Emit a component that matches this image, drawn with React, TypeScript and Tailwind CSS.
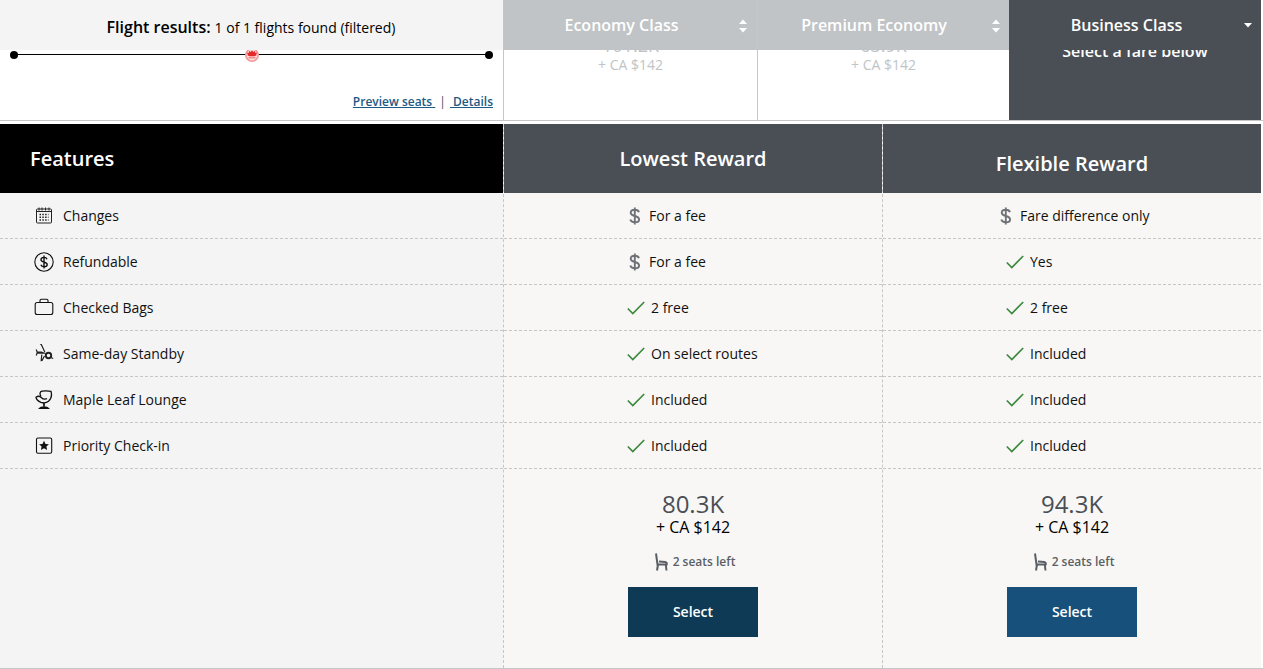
import React from "react";

const font = "font-['Open_Sans',sans-serif]";

const Sort = ({ active, className }: { active?: boolean; className: string }) =>
  active ? (
    <svg width="8" height="5" viewBox="0 0 8 5" className={`absolute top-[23px] ${className}`}>
      <path d="M0 0h8L4 4.500z" fill="#fff" />
    </svg>
  ) : (
    <svg width="8" height="14" viewBox="0 0 8 14" className={`absolute top-[19px] ${className}`}>
      <path d="M0 5h8L4 .5zM0 9h8L4 13.500z" fill="#fff" />
    </svg>
  );

const Calendar = () => (
  <svg width="22" height="20" viewBox="0 0 22 20" fill="none" stroke="#222" strokeWidth="1">
    <rect x="3.500" y="3" width="15" height="14" rx="1" />
    <path d="M6 1.500v3M9 1.500v3M12.500 1.500v3M16 1.500v3M3.500 5.500h15" />
    <path d="M6.500 8.500h9M6.500 11.200h9M6.500 14h9" strokeWidth="1.500" strokeDasharray="1.500 1.300" />
  </svg>
);

const DollarCircle = () => (
  <svg width="22" height="20" viewBox="0 0 22 20" fill="none" stroke="#111" strokeWidth="1.100">
    <circle cx="11" cy="10" r="9.200" />
    <path d="M14 7.200C13.600 6 12.400 5.400 11 5.400c-1.700 0-3 .9-3 2.300 0 3.200 6.200 1.600 6.200 4.700 0 1.400-1.400 2.300-3.100 2.300-1.500 0-2.800-.7-3.200-2M11 3.500v13" strokeWidth="1.400" />
  </svg>
);

const Bag = () => (
  <svg width="22" height="20" viewBox="0 0 22 20" fill="none" stroke="#111" strokeWidth="1.100">
    <rect x="2.200" y="4.500" width="17.600" height="12" rx="2" />
    <path d="M7 4.500V2.500C7 1.800 7.500 1.200 8.200 1.200h5.600c.7 0 1.200.6 1.200 1.300v2" />
  </svg>
);

const Standby = () => (
  <svg width="22" height="20" viewBox="0 0 22 20" fill="none" stroke="#222" strokeWidth="1.200">
    <path d="M3.200 5.500l1.200 3-1.200 3M3.500 8.200h4.800l4.200 1.300M3.500 9.200h6.500M7.300 .3l1 .2 3.500 7.500M8.800 10.500l-.6 6 .9-.1 2.400-4.400" />
    <circle cx="15.500" cy="11.500" r="2.700" strokeWidth="1.900" />
    <path d="M18 13.500l2.200 1" />
  </svg>
);

const Lounge = () => (
  <svg width="22" height="20" viewBox="0 0 22 20" fill="none" stroke="#111" strokeWidth="1.300">
    <path d="M8 6.500C6.600 4.500 6.600 1.500 9 1.100c3-.3 6.500-.3 9 .3 1 3.500.2 7.500-2.500 9.900-1.900 1.500-5 1.800-7.500 1-2.500-1-4.600-2.800-5-5C4.800 5.900 7 6.200 8.500 7.700c1.300 1.300 3.500 1.700 5.500 1" />
    <path d="M11 13v3.500" strokeWidth="1.700" />
    <path d="M6.500 18.400c1.500-1.900 7.500-1.900 9 0z" fill="#111" />
  </svg>
);

const StarBox = () => (
  <svg width="22" height="20" viewBox="0 0 22 20" fill="none">
    <rect x="3.500" y="2" width="15.200" height="15.200" rx="1.500" stroke="#111" strokeWidth="1.100" />
    <path d="M11 4.800l1.500 3.100 3.400.4-2.500 2.300.7 3.300-3.100-1.700-3.100 1.700.7-3.300-2.500-2.300 3.400-.4z" fill="#111" />
  </svg>
);

const Dollar = () => (
  <svg width="12" height="18" viewBox="0 0 12 18" fill="none" stroke="#6f7377" strokeWidth="1.900">
    <path d="M9.900 5.300C9.500 3.500 7.800 2.800 5.800 2.800 3.600 2.800 1.700 3.900 1.700 5.700c0 4.200 8.400 2.400 8.400 6.700 0 1.800-2 2.900-4.300 2.900-2.200 0-4-.9-4.500-2.700M5.800 .6v16.800" />
  </svg>
);

const Check = () => (
  <svg width="18" height="14" viewBox="0 0 18 14" fill="none" stroke="#3b8a3e" strokeWidth="1.700">
    <path d="M.8 7.500l5 5L17.200 1" />
  </svg>
);

const Seat = () => (
  <svg width="14" height="18" viewBox="0 0 14 18" fill="none" stroke="#5a5f65" strokeWidth="2">
    <path d="M2 .5l1.500 11h9.200c.4-1.200-.3-2.400-1.500-2.600L5 8.500" />
    <path d="M4 11.500l-1 6M11.800 11.500l.7 6" />
  </svg>
);

const features = [
  { label: "Changes", icon: <Calendar /> },
  { label: "Refundable", icon: <DollarCircle /> },
  { label: "Checked Bags", icon: <Bag /> },
  { label: "Same-day Standby", icon: <Standby /> },
  { label: "Maple Leaf Lounge", icon: <Lounge /> },
  { label: "Priority Check-in", icon: <StarBox /> },
];

type Cell = { text: string; fee?: boolean; wide?: boolean };

const lowest: Cell[] = [
  { text: "For a fee", fee: true },
  { text: "For a fee", fee: true },
  { text: "2 free" },
  { text: "On select routes" },
  { text: "Included" },
  { text: "Included" },
];

const flexible: Cell[] = [
  { text: "Fare difference only", fee: true, wide: true },
  { text: "Yes" },
  { text: "2 free" },
  { text: "Included" },
  { text: "Included" },
  { text: "Included" },
];

const CabinTab = ({
  title,
  price,
  active,
  className,
  titleClass,
  sortClass,
}: {
  title: string;
  price?: string;
  active?: boolean;
  className: string;
  titleClass: string;
  sortClass: string;
}) => (
  <div className={`relative flex flex-col overflow-hidden ${className} ${active ? "bg-[#4a4f55]" : "bg-white border-l border-[#c4c6c8]"}`}>
    <div className={`relative h-[50px] shrink-0 flex items-center justify-center text-[16px] font-semibold text-white ${titleClass} ${active ? "bg-[#4a4f55]" : "bg-[#c0c4c7]"}`}>
      {title}
      <Sort active={active} className={sortClass} />
    </div>
    {active ? (
      <div className="h-[12px] overflow-hidden flex justify-center">
        <div className="text-[16px] font-semibold text-white leading-[22px] -mt-[10px]">Select a fare below</div>
      </div>
    ) : (
      <div className="h-[24px] overflow-hidden text-center text-[#c0c4c7]">
        <div className="text-[18px] leading-[20px] -mt-[15px]">{price}</div>
        <div className="text-[14px] leading-[19px]">+ CA $142</div>
      </div>
    )}
  </div>
);

const FareColumn = ({
  title,
  cells,
  points,
  button,
  titleClass,
}: {
  title: string;
  cells: Cell[];
  points: string;
  button: string;
  titleClass: string;
}) => (
  <div className="w-[379px] bg-[#f8f7f5] border-l border-dashed border-[#c4c6c8] flex flex-col">
    <div className={`h-[69px] bg-[#4a4f55] flex justify-center text-[20px] font-semibold text-white ${titleClass}`}>
      {title}
    </div>
    {cells.map((c, i) => (
      <div key={i} className={`h-[46px] flex items-center border-b border-dashed border-[#c4c6c8] text-[14px] text-[#111] ${c.wide ? "pl-[117px]" : c.fee ? "pl-[125px]" : "pl-[123px]"}`}>
        {c.fee ? (
          <span className="w-[20px] flex"><Dollar /></span>
        ) : (
          <span className="w-[24px] flex"><Check /></span>
        )}
        {c.text}
      </div>
    ))}
    <div className="flex-1 flex flex-col items-center pt-[20px]">
      <div className="text-[24px] leading-[30px] text-[#4a4f55]">{points}</div>
      <div className="text-[16px] leading-[20px] text-black mt-[-2px]">+ CA $142</div>
      <div className="mt-[16px] flex items-center gap-[5px] pl-[3px] text-[12px] font-semibold text-[#5a5f65] h-[18px]">
        <Seat />
        2 seats left
      </div>
      <button className={`mt-[16px] w-[130px] h-[50px] pb-[2px] text-[14px] font-semibold text-white ${button}`}>Select</button>
    </div>
  </div>
);

export default function App() {
  return (
    <div className={`${font} w-[1263px] h-[669px] bg-white overflow-hidden`}>
      <div className="h-[121px] flex border-b border-[#c4c6c8]">
        <div className="w-[503px] shrink-0 flex flex-col">
          <div className="h-[50px] bg-[#f4f4f4] flex items-center justify-center text-[14px] text-black pt-[4px] pr-[1px]">
            <span className="font-semibold text-[16px] leading-[20px] mr-[4px]">Flight results:</span> 1 of 1 flights found (filtered)
          </div>
          <div className="relative h-[12px] mx-[10px]">
            <div className="absolute left-[4px] right-[4px] top-[4px] h-[1px] bg-black" />
            <div className="absolute left-0 top-[1px] w-[8px] h-[8px] rounded-full bg-black" />
            <div className="absolute right-0 top-[1px] w-[8px] h-[8px] rounded-full bg-black" />
            <svg width="14" height="12" viewBox="0 0 14 12" className="absolute left-[235px] top-0">
              <circle cx="7" cy="5" r="6.200" fill="#fbdcdc" stroke="#f29a9a" strokeWidth="1.600" />
              <path d="M7 .2l1.300 1.700 1.700-.8.300 1.900 1.700-.4-.8 3-1.700.7H4.500l-1.700-.7-.8-3 1.700.4.300-1.900 1.700.8z" fill="#e32b2b" />
              <path d="M3.500 7.800h7" stroke="#ee6a6a" strokeWidth="1" />
            </svg>
          </div>
          <div className="flex-1 flex items-end justify-end pr-[10px] pb-[10px] text-[12px] font-semibold leading-[16px] text-[#4a4f55]">
            <a className="text-[#1c5a84] underline whitespace-pre">Preview seats </a>
            <span className="mx-[4px] font-normal">|</span>
            <a className="text-[#1c5a84] underline whitespace-pre"> Details</a>
          </div>
        </div>
        <CabinTab title="Economy Class" price="101.2K" className="w-[254px]" titleClass="pr-[18px]" sortClass="right-[10px]" />
        <CabinTab title="Premium Economy" price="63.9K" className="w-[252px]" titleClass="pr-[19px]" sortClass="right-[9px]" />
        <CabinTab title="Business Class" active className="w-[252px]" titleClass="pr-[17px]" sortClass="right-[9px]" />
      </div>

      <div className="mt-[3px] h-[545px] flex border-b border-[#c4c6c8]">
        <div className="w-[503px] shrink-0 bg-[#f4f4f4] flex flex-col">
          <div className="h-[69px] bg-black text-white text-[20px] font-semibold flex items-center pl-[30px]">Features</div>
          {features.map((f) => (
            <div key={f.label} className="h-[46px] flex items-center border-b border-dashed border-[#c4c6c8] text-[14px] text-[#111]">
              <span className="w-[63px] pl-[33px] flex">{f.icon}</span>
              {f.label}
            </div>
          ))}
        </div>
        <FareColumn title="Lowest Reward" cells={lowest} points="80.3K" button="bg-[#0e3a56]" titleClass="items-center" />
        <FareColumn title="Flexible Reward" cells={flexible} points="94.3K" button="bg-[#17507a]" titleClass="items-center pt-[10px]" />
      </div>
    </div>
  );
}
